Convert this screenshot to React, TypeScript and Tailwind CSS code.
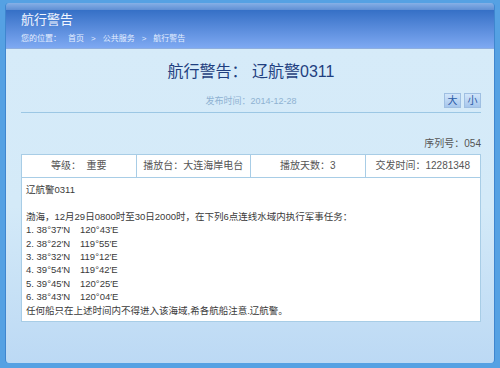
import React from "react";

const font = { fontFamily: '"Liberation Sans", "Noto Sans CJK SC", sans-serif' };

const points: [string, string][] = [
  ["1. 38°37′N", "120°43′E"],
  ["2. 38°22′N", "119°55′E"],
  ["3. 38°32′N", "119°12′E"],
  ["4. 39°54′N", "119°42′E"],
  ["5. 39°45′N", "120°25′E"],
  ["6. 38°43′N", "120°04′E"],
];

function Header() {
  return (
    <div className="flex flex-col">
      <div className="h-[7px] bg-gradient-to-b from-[#86b0e6] to-[#5f8fd4]" />
      <div className="h-[39px] bg-gradient-to-b from-[#3570c6] to-[#7ea9f2] border-b border-[#8eaedf] px-[15px] pt-[1px]">
        <div className="text-[13px] leading-[18px] text-[#f2f6ff]">航行警告</div>
        <div className="mt-[4px] text-[8px] leading-[11px] text-[#e4eeff] flex gap-[7px]">
          <span>您的位置：</span>
          <span>首页</span>
          <span>&gt;</span>
          <span>公共服务</span>
          <span>&gt;</span>
          <span>航行警告</span>
        </div>
      </div>
    </div>
  );
}

function SizeButton({ label }: { label: string }) {
  return (
    <button className="w-[17px] h-[15px] flex items-center justify-center text-[10px] leading-none text-[#2a5aa6] bg-gradient-to-b from-[#d2e6fa] to-[#a6c6ec] border border-[#9fbfe2]">
      {label}
    </button>
  );
}

export default function App() {
  return (
    <div className="w-[500px] h-[368px] bg-[#55a1e3] pt-[3px] pl-[5px] pr-[5px] pb-[5px]" style={font}>
      <div className="h-full rounded-[4px] overflow-hidden flex flex-col border-l border-r border-[#3f86cf]">
        <Header />
        <div className="flex-1 bg-gradient-to-b from-[#d6ebf9] via-[#d4eaf8] to-[#bcd9f4] pl-[15px] pr-[13px] pt-[13px]">
          <h1 className="text-center text-[16px] leading-[20px] text-[#1f3f80]">航行警告： 辽航警0311</h1>
          <div className="mt-[11px] grid grid-cols-[1fr_auto_1fr] items-center border-b border-[#9cc7e4] pb-[4px]">
            <div />
            <div className="text-[9px] leading-[12px] text-[#8fb2d2]">发布时间：2014-12-28</div>
            <div className="flex justify-end gap-[3px]">
              <SizeButton label="大" />
              <SizeButton label="小" />
            </div>
          </div>
          <div className="mt-[24px] mb-[3px] text-right text-[10px] leading-[14px] text-[#555]">序列号：054</div>
          <div className="border border-[#a8cde6] bg-white text-[#444]">
            <div className="grid grid-cols-4 h-[23px] border-b border-[#a8cde6] text-[10px] leading-[22px] text-center text-[#555]">
              <div className="border-r border-[#a8cde6]">等级：&nbsp;&nbsp;重要</div>
              <div className="border-r border-[#a8cde6]">播放台：大连海岸电台</div>
              <div className="border-r border-[#a8cde6]">播放天数：3</div>
              <div>交发时间：12281348</div>
            </div>
            <div className="px-[4px] pt-[5px] pb-[4px] text-[9.5px] leading-[13.4px] text-[#3a3a3a]">
              <div>辽航警0311</div>
              <div>&nbsp;</div>
              <div>渤海，12月29日0800时至30日2000时，在下列6点连线水域内执行军事任务：</div>
              {points.map(([lat, lon]) => (
                <div key={lat} className="flex">
                  <span className="w-[54px]">{lat}</span>
                  <span>{lon}</span>
                </div>
              ))}
              <div>任何船只在上述时间内不得进入该海域,希各航船注意.辽航警。</div>
            </div>
          </div>
        </div>
      </div>
    </div>
  );
}
